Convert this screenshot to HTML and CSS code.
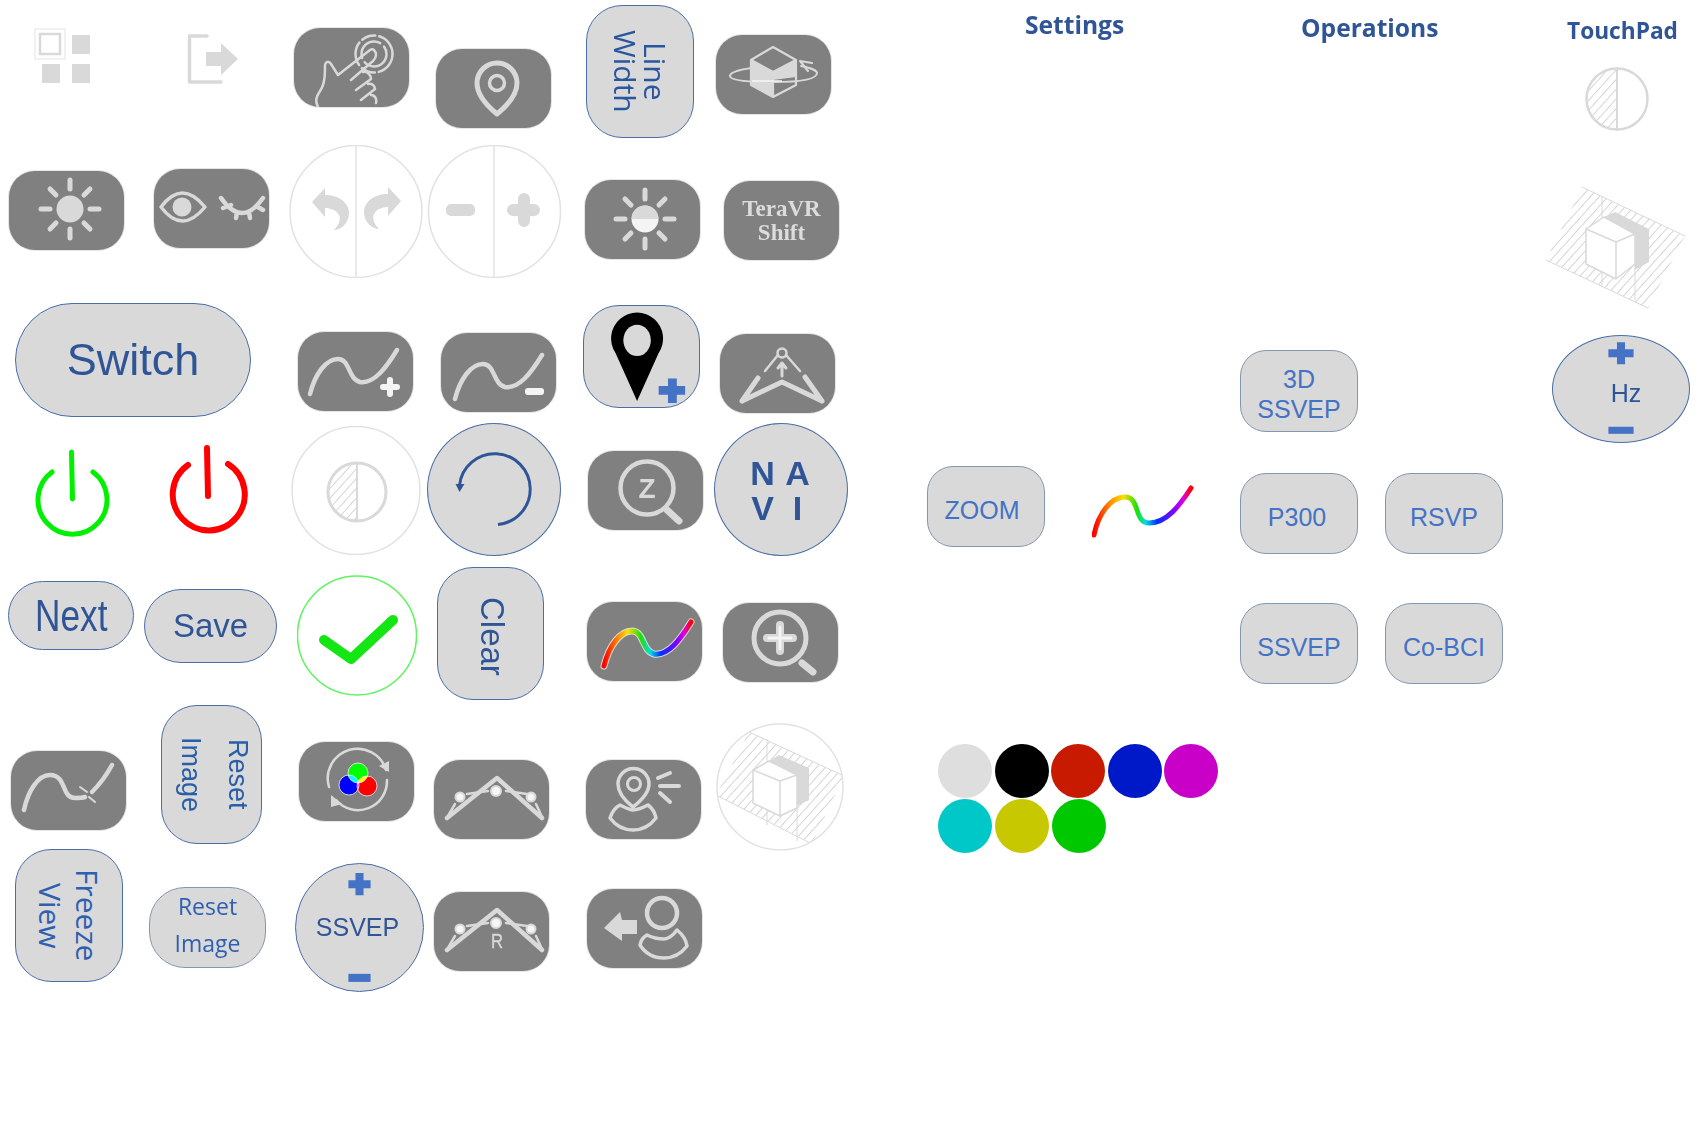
FILE: index.html
```html
<!DOCTYPE html>
<html lang="en">
<head>
<meta charset="utf-8">
<title>Button sheet</title>
<link rel="stylesheet" href="styles.css">
</head>
<body>
<svg class="defs" width="0" height="0" aria-hidden="true">
  <defs>
    <pattern id="hatch" width="6.500" height="6.500" patternUnits="userSpaceOnUse" patternTransform="rotate(42)">
      <line x1="0" y1="0" x2="0" y2="6.500" class="hl"/>
    </pattern>
    <linearGradient id="rb1" gradientUnits="userSpaceOnUse" x1="17" y1="0" x2="104" y2="0">
      <stop offset="0" stop-color="#ff0000"/><stop offset=".15" stop-color="#ff8000"/><stop offset=".27" stop-color="#ffe000"/><stop offset=".42" stop-color="#20e000"/><stop offset=".53" stop-color="#00e0e0"/><stop offset=".65" stop-color="#0030ff"/><stop offset=".84" stop-color="#8000ff"/><stop offset=".92" stop-color="#e000e0"/><stop offset="1" stop-color="#ff0000"/>
    </linearGradient>
    <linearGradient id="rb2" gradientUnits="userSpaceOnUse" x1="2" y1="0" x2="99" y2="0">
      <stop offset="0" stop-color="#ff0000"/><stop offset=".15" stop-color="#ff8000"/><stop offset=".3" stop-color="#ffe000"/><stop offset=".44" stop-color="#20e000"/><stop offset=".53" stop-color="#00e0e0"/><stop offset=".65" stop-color="#0030ff"/><stop offset=".84" stop-color="#9000ff"/><stop offset=".92" stop-color="#e000e0"/><stop offset="1" stop-color="#ff0000"/>
    </linearGradient>
    <clipPath id="halfC"><rect x="0" y="0" width="30" height="60"/></clipPath>
    <clipPath id="halfS"><rect x="0" y="0" width="33" height="66"/></clipPath>
    <clipPath id="roundC"><circle cx="64" cy="64" r="63"/></clipPath>
    <path id="curve" d="M12 62C17 42 28 27 40 27C52 27 50 47 62 50C76 52 88 36 99 18"/>
    <g id="rays">
      <line x1="0" y1="-29" x2="0" y2="-20"/><line x1="0" y1="20" x2="0" y2="29"/>
      <line x1="-29" y1="0" x2="-20" y2="0"/><line x1="20" y1="0" x2="29" y2="0"/>
      <line x1="-20" y1="-20" x2="-14" y2="-14"/><line x1="20" y1="-20" x2="14" y2="-14"/>
      <line x1="-20" y1="20" x2="-14" y2="14"/><line x1="20" y1="20" x2="14" y2="14"/>
    </g>
    <g id="multi">
      <path class="s" stroke-width="4.500" d="M13 58L63 18L108 58"/>
      <path class="s" stroke-width="2.500" d="M33 34L54 31M72 31L93 34M14 56L21 44M102 44L108 57"/>
      <circle class="dot" cx="26" cy="37" r="4.500"/><circle class="dot" cx="62" cy="31" r="5"/><circle class="dot" cx="97" cy="37" r="4.500"/>
    </g>
  </defs>
</svg>

<main class="canvas">
  <svg class="node n-grid" viewBox="0 0 60 60">
    <rect x="2" y="2" width="30" height="30" class="thin"/>
    <rect x="7" y="7" width="20" height="20" class="s sq" stroke-width="2.500"/>
    <rect x="39" y="8" width="18" height="19" class="f"/>
    <rect x="9" y="37" width="18" height="19" class="f"/>
    <rect x="39" y="37" width="18" height="19" class="f"/>
  </svg>
  <svg class="node n-logout" viewBox="0 0 60 56">
    <path class="s" stroke-width="3.500" d="M23 5H5.500V51H37"/>
    <path class="f" d="M22 21H37V12L54 28L37 44V35H22Z"/>
  </svg>

  <div class="node tile n-touch"><svg class="ico" viewBox="0 0 115 79">
    <path class="s" stroke-width="2.500" d="M24 79C21 73 22 69 26 63C31 56 31 46 31 37C32 33 35 33 37 36L44 47L76 22C79 20 82 23 82 27C82 29 81 31 79 33L57 52M69 44C73 43 77 47 77 51L62 62M74 56C78 55 81 58 81 61L67 72M77 67C81 67 83 71 82 75"/>
    <circle class="s dash1" cx="80" cy="26" r="18.500" stroke-width="2.500"/>
    <circle class="s dash2" cx="80" cy="26" r="12.500" stroke-width="2.500"/>
  </svg></div>

  <div class="node tile n-pin"><svg class="ico" viewBox="0 0 115 79">
    <path class="s" stroke-width="5" d="M61 65C50 56 41 46 41 34A20 20 0 0 1 81 34C81 46 72 56 61 65Z"/>
    <circle class="s" cx="61" cy="34" r="7.500" stroke-width="3.500"/>
  </svg></div>

  <div class="node pill vtext lw n-linewidth"><span>Line<br>Width</span></div>

  <div class="node tile n-cube"><svg class="ico" viewBox="0 0 115 79">
    <path class="f" d="M35 25L57 37V62L35 50Z"/>
    <path class="f" d="M57 37L80 25V42L57 45Z"/>
    <path class="s" stroke-width="2.200" d="M35 25L57 12L80 25L57 37ZM35 25V50L57 62L80 50V25M57 37V62"/>
    <path class="s" stroke-width="2" d="M35 33C22 35 14 38 14 41C14 46 35 47 57 47C80 47 101 45 101 38C101 36 96 33 85 31"/>
    <path class="s" stroke-width="2.200" d="M84 26L92 36M84 26L96 28"/>
    <line x1="36" y1="46" x2="66" y2="46" class="wl"/>
  </svg></div>

  <div class="node tile n-sun"><svg class="ico" viewBox="0 0 115 79">
    <use href="#rays" class="s" stroke-width="5" transform="translate(61 38)"/>
    <circle class="f" cx="61" cy="38" r="13.500"/>
  </svg></div>

  <div class="node tile n-eye"><svg class="ico" viewBox="0 0 115 79">
    <path class="s" stroke-width="3.500" d="M7 38Q28 10 51 38Q28 66 7 38Z"/>
    <circle class="f" cx="28" cy="38" r="9.500"/>
    <path class="s" stroke-width="4.500" d="M67 29Q88 59 109 29M69 39L77 36M82 49L83 43M96 49L95 43M109 41L102 37"/>
  </svg></div>

  <svg class="node n-undo" viewBox="0 0 134 133">
    <circle class="ring" cx="67" cy="66.500" r="66"/>
    <line class="ring" x1="67" y1="0" x2="67" y2="133"/>
    <path id="arrowBack" class="f" d="M23 57L36 43V50C50 50 60 58 60 68C60 78 52 85 45 85C50 80 52 74 50 70C47 65 42 63 36 63V72Z"/>
    <use href="#arrowBack" transform="translate(135 -1) scale(-1 1)"/>
  </svg>

  <svg class="node n-minplus" viewBox="0 0 135 133">
    <circle class="ring" cx="67.500" cy="66.500" r="66"/>
    <line class="ring" x1="67" y1="0" x2="67" y2="133"/>
    <rect class="f" x="19" y="59" width="29" height="12" rx="5"/>
    <path class="s" stroke-width="12" d="M86 65H107M97 54V76"/>
  </svg>

  <div class="node tile n-halfsun"><svg class="ico" viewBox="0 0 115 79">
    <use href="#rays" class="s" stroke-width="5" transform="translate(60 39)"/>
    <circle class="lite" cx="60" cy="39" r="13.500"/>
    <path class="f" d="M46.500 39A13.500 13.500 0 0 1 73.500 39Z"/>
  </svg></div>

  <div class="node tile n-tera"><span class="tera">TeraVR<br>Shift</span></div>

  <div class="node pill switch n-switch">Switch</div>

  <svg class="node n-pow-g" viewBox="0 0 86 90">
    <path class="pow-g" stroke-width="5" d="M22 25A34.500 34.500 0 1 0 63 25M41.500 5L42.500 52"/>
  </svg>
  <svg class="node n-pow-r" viewBox="0 0 88 92">
    <path class="pow-r" stroke-width="6" d="M23 23A36 36 0 1 0 63 22M42 6L43 54"/>
  </svg>

  <div class="node tile n-cplus"><svg class="ico" viewBox="0 0 115 79">
    <use href="#curve" class="s" stroke-width="4.500"/>
    <path class="wp" stroke-width="6" d="M85 55H99M92 48V62"/>
  </svg></div>

  <div class="node tile n-cminus"><svg class="ico" viewBox="0 0 115 79">
    <use href="#curve" class="s" stroke-width="4.500" transform="translate(2 4)"/>
    <rect class="lite2" x="84" y="55" width="19" height="7" rx="3"/>
  </svg></div>

  <div class="node pill n-pinplus"><svg class="ico" viewBox="0 0 117 103">
    <path class="blk" d="M54 97L32 48A26.500 26.500 0 1 1 76 48Z"/>
    <ellipse class="hole" cx="54" cy="35" rx="14" ry="16"/>
    <path class="bplus" stroke-width="9" d="M76 86H103M90 74V99"/>
  </svg></div>

  <div class="node tile n-tri"><svg class="ico" viewBox="0 0 115 79">
    <path class="s" stroke-width="5" d="M22 67L62 48L102 67M22 67L38 44M102 67L85 43"/>
    <path class="s" stroke-width="2.500" d="M45 37L58 21M80 37L66 21"/>
    <circle class="s" cx="62" cy="19" r="4.500" stroke-width="2.500"/>
    <path class="s" stroke-width="3" d="M62 42V30M58 34L62 29L66 34"/>
  </svg></div>

  <svg class="node n-contrast" viewBox="0 0 130 129">
    <circle class="ring" cx="65" cy="64.500" r="64"/>
    <g transform="translate(36 36)">
      <circle class="hatchfill" cx="30" cy="30" r="29" clip-path="url(#halfC)"/>
      <circle class="s" cx="30" cy="30" r="29" stroke-width="3"/>
      <line class="s" x1="30" y1="1" x2="30" y2="59" stroke-width="2"/>
    </g>
  </svg>

  <div class="node circle n-rotate"><svg class="ico" viewBox="0 0 134 133">
    <path class="blue" stroke-width="3" d="M71 102A36 36 0 1 0 32 62"/>
    <path class="bluef" d="M28 61H37L32 69Z"/>
  </svg></div>

  <div class="node tile n-z"><svg class="ico" viewBox="0 0 115 79">
    <circle class="s" cx="59" cy="37" r="26.500" stroke-width="4.500"/>
    <text class="ztxt" x="59" y="47">Z</text>
    <line class="s" stroke-width="7" x1="79" y1="59" x2="91" y2="70"/>
  </svg></div>

  <div class="node circle n-navi"><div class="navi"><span>N</span><span>A</span><span>V</span><span>I</span></div></div>

  <div class="node pill next n-next"><span>Next</span></div>
  <div class="node pill save n-save">Save</div>

  <svg class="node n-check" viewBox="0 0 120 121">
    <circle class="gring" cx="60" cy="60.500" r="59.500"/>
    <path class="gcheck" stroke-width="10" d="M27 65L54 84L96 45"/>
  </svg>

  <div class="node pill vtext clear n-clear"><span>Clear</span></div>

  <div class="node tile n-rainbow"><svg class="ico" viewBox="0 0 115 79">
    <use href="#curve" class="halo" stroke-width="7" transform="translate(5 2)"/>
    <path class="rb" stroke-width="5" d="M17 64C22 44 33 29 45 29C57 29 55 49 67 52C81 54 93 38 104 20"/>
  </svg></div>

  <div class="node tile n-zplus"><svg class="ico" viewBox="0 0 115 79">
    <circle class="s" cx="57" cy="35" r="26" stroke-width="5"/>
    <path class="s" stroke-width="8" d="M44 35H70M57 22V48"/>
    <path class="wp" stroke-width="3" d="M46 35H68M57 24V46"/>
    <line class="s" stroke-width="7" x1="79" y1="60" x2="90" y2="69"/>
  </svg></div>

  <div class="node tile n-ccut"><svg class="ico" viewBox="0 0 115 79">
    <path class="s" stroke-width="4.500" d="M13 59C17 40 27 24 39 24C56 24 50 47 64 47C68 47 71 47 74 46M81 41C88 34 95 25 101 14"/>
    <path class="s" stroke-width="2" d="M69 36L76 41M78 46L84 51"/>
  </svg></div>

  <div class="node pill vtext rimg n-resetv"><span>Reset<br>Image</span></div>

  <div class="node tile n-rgb"><svg class="ico" viewBox="0 0 115 79">
    <path class="s" stroke-width="2.500" d="M30 45A29 29 0 0 1 87 28"/>
    <path class="f" d="M80 24L90 19L90 30Z"/>
    <path class="s" stroke-width="2.500" d="M88 38A29 29 0 0 1 37 58"/>
    <path class="f" d="M32 53L43 62L32 65Z"/>
    <g class="iso">
      <circle class="m" fill="#00ff00" cx="59" cy="31" r="10"/>
      <circle class="m" fill="#0000ff" cx="50" cy="43" r="10"/>
      <circle class="m" fill="#ff0000" cx="68" cy="44" r="10"/>
    </g>
  </svg></div>

  <div class="node tile n-multi"><svg class="ico" viewBox="0 0 115 79"><use href="#multi"/></svg></div>

  <div class="node tile n-locp"><svg class="ico" viewBox="0 0 115 79">
    <path class="s" stroke-width="3.500" d="M47 47C38 40 32 32 32 24A15.500 15.500 0 0 1 63 24C63 32 56 40 47 47Z"/>
    <circle class="s" cx="48" cy="24" r="6.500" stroke-width="3"/>
    <path class="s" stroke-width="4" d="M72 18L84 13M74 26H93M74 33L84 42"/>
    <path class="s" stroke-width="3.500" d="M24 58C26 52 30 47 34 45C38 47 43 50 47 50C52 50 58 47 62 45C66 48 69 53 70 58C64 66 56 70 47 70C38 70 30 66 24 58Z"/>
  </svg></div>

  <svg class="node n-cubec" viewBox="0 0 128 128">
    <g clip-path="url(#roundC)">
      <path class="hatchfill" d="M33 9L128 53L96 121L0 72Z"/>
      <path class="s thinner" d="M33 9L128 53M96 121L0 72M51 16V102M81 52V118"/>
    </g>
    <path class="lite3" d="M37 47L53 38L81 52L64 58V93L37 80Z"/>
    <path class="lite3" d="M64 58L81 52V85L64 93Z"/>
    <path class="f" d="M53 38L63 32L93 45V77L81 83V52Z"/>
    <path class="s" stroke-width="1.500" d="M37 47L53 38L81 52L64 58ZM37 47V80L64 93L81 85V52M64 58V93"/>
    <circle class="ring" cx="64" cy="64" r="63"/>
  </svg>

  <div class="node pill vtext freeze n-freeze"><span>Freeze<br>View</span></div>
  <div class="node pill rih n-reseth"><span>Reset<br>Image</span></div>

  <div class="node circle ctrl n-ssvep">
    <svg class="overlay" viewBox="0 0 129 129">
      <path class="bplus" stroke-width="8" d="M53 21H75M64 10V32"/>
      <rect class="bluef2" x="53" y="110" width="22" height="8"/>
    </svg>
    <span class="ssv">SSVEP</span>
  </div>

  <div class="node tile n-rmulti"><svg class="ico" viewBox="0 0 115 79">
    <use href="#multi"/>
    <text class="rtxt" x="63" y="56" textLength="12" lengthAdjust="spacingAndGlyphs">R</text>
  </svg></div>

  <div class="node tile n-back"><svg class="ico" viewBox="0 0 115 79">
    <circle class="s" cx="75" cy="24" r="15" stroke-width="4.500"/>
    <path class="s" stroke-width="3.500" d="M53 56C54 51 56 48 60 46C64 48 70 50 77 50C82 50 87 45 90 41C95 45 99 50 100 57C94 65 86 69 77 69C66 69 58 64 53 56Z"/>
    <path class="f" d="M17 39L33 23L35 31H50V45H35L35 52Z"/>
  </svg></div>

  <h2 class="node head n-h-settings">Settings</h2>
  <h2 class="node head n-h-ops">Operations</h2>
  <h2 class="node head small n-h-tp">TouchPad</h2>

  <svg class="node n-halfc" viewBox="0 0 66 66">
    <circle class="hatchfill" cx="33" cy="33" r="30" clip-path="url(#halfS)"/>
    <circle class="s" cx="33" cy="33" r="30.500" stroke-width="2.500"/>
    <line class="s" x1="33" y1="2" x2="33" y2="64" stroke-width="2"/>
  </svg>

  <svg class="node n-cubep" viewBox="0 0 140 122">
    <path class="hatchfill" d="M36 0L139 49L102 121L0 73Z"/>
    <path class="s thinner" d="M36 0L139 49M102 121L0 73M56 10V100M89 47V113"/>
    <path class="lite3" d="M40 42L58 30L89 47L70 55V92L40 77Z"/>
    <path class="lite3" d="M70 55L89 47V77L70 92Z"/>
    <path class="f" d="M58 30L69 25L103 42V75L89 83V47Z"/>
    <path class="s" stroke-width="1.500" d="M40 42L58 30L89 47L70 55ZM40 42V77L70 92L89 77V47M70 55V92"/>
  </svg>

  <div class="node ellipse ctrl n-hz">
    <svg class="overlay" viewBox="0 0 138 108">
      <path class="bplus" stroke-width="8" d="M56 18H81M68.500 7V29"/>
      <rect class="bluef2" x="56" y="91" width="25" height="7"/>
    </svg>
    <span class="hz">Hz</span>
  </div>

  <div class="node soft s-3d n-3d"><span>3D<br>SSVEP</span></div>
  <div class="node soft s-zoom n-zoomb"><span>ZOOM</span></div>
  <svg class="node n-rbow" viewBox="0 0 102 53">
    <path class="rb2" stroke-width="5" d="M2 50C6 30 18 12 33 12C48 12 42 38 57 38C75 38 88 20 99 3"/>
  </svg>
  <div class="node soft s-p300 n-p300"><span>P300</span></div>
  <div class="node soft n-rsvp"><span>RSVP</span></div>
  <div class="node soft n-ssv2"><span>SSVEP</span></div>
  <div class="node soft n-cobci"><span>Co-BCI</span></div>

  <div class="node swatch c-gray n-s1"></div>
  <div class="node swatch c-black n-s2"></div>
  <div class="node swatch c-red n-s3"></div>
  <div class="node swatch c-blue n-s4"></div>
  <div class="node swatch c-mag n-s5"></div>
  <div class="node swatch c-cyan n-s6"></div>
  <div class="node swatch c-yel n-s7"></div>
  <div class="node swatch c-grn n-s8"></div>
</main>
</body>
</html>
```

FILE: styles.css
```css
html, body { margin: 0; padding: 0; background: #fff; overflow: hidden; }
.defs { position: absolute; }
.canvas {
  position: relative;
  width: 1701px;
  height: 1126px;
  font-family: "Liberation Sans", Arial, sans-serif;
  color: #2f5597;
}
.node { position: absolute; box-sizing: border-box; margin: 0; }
.ico { display: block; width: 100%; height: 100%; }

/* base components */
.tile {
  width: 115px;
  height: 79px;
  background: #808080;
  border-radius: 26px;
  box-shadow: 0 0 0 1px #e6e6e6;
  display: flex;
  align-items: center;
  justify-content: center;
}
.pill, .circle, .ellipse {
  background: #d9d9d9;
  border: 1.5px solid #4a6ea8;
  display: flex;
  align-items: center;
  justify-content: center;
  text-align: center;
}
.pill { border-radius: 36px; }
.circle { border-radius: 50%; }
.ellipse { border-radius: 50%; }
.ctrl { position: absolute; }
.overlay { position: absolute; inset: -1.5px; width: calc(100% + 3px); height: calc(100% + 3px); }
.vtext { writing-mode: vertical-rl; }
.soft {
  background: #d9d9d9;
  border: 1.5px solid #8497b0;
  border-radius: 26px;
  display: flex;
  align-items: center;
  justify-content: center;
  text-align: center;
  color: #4472c4;
  font-size: 25px;
  line-height: 30px;
  padding-top: 6px;
}
.s-3d { padding-top: 5px; }
.s-zoom { padding-right: 8px; }
.s-p300 { padding-right: 4px; }
.swatch { width: 54px; height: 54px; border-radius: 50%; }
.c-gray { background: #dedede; }
.c-black { background: #000; }
.c-red { background: #c81a00; }
.c-blue { background: #0019c8; }
.c-mag { background: #c800c8; }
.c-cyan { background: #00c8c8; }
.c-yel { background: #c8c800; }
.c-grn { background: #00c800; }

/* svg paint */
.s { fill: none; stroke: #d9d9d9; stroke-linecap: round; stroke-linejoin: round; }
.f { fill: #d9d9d9; }
.thin { fill: none; stroke: #e4e4e4; stroke-width: 1; }
.sq { stroke-linecap: butt; stroke-linejoin: miter; }
.ring { fill: #fff; stroke: #e2e2e2; stroke-width: 1.5; }
line.ring { fill: none; }
.n-cubec .ring { fill: none; }
.dash1 { stroke-dasharray: 24 4 14 4; }
.dash2 { stroke-dasharray: 30 5; }
.wl { stroke: #f4f4f4; stroke-width: 1.5; }
.wp { fill: none; stroke: #f4f4f4; stroke-linecap: round; }
.lite { fill: #f4f4f4; }
.lite2 { fill: #f4f4f4; }
.lite3 { fill: #fff; }
.blk { fill: #000; }
.hole { fill: #d9d9d9; }
.bplus { fill: none; stroke: #4472c4; }
.bluef2 { fill: #4472c4; }
.blue { fill: none; stroke: #2f5597; }
.bluef { fill: #2f5597; }
.hl { stroke: #d2d2d2; stroke-width: 1.8; }
.hatchfill { fill: url(#hatch); }
.thinner { stroke-width: 1; }
.dot { fill: #f6f6f6; stroke: #d9d9d9; stroke-width: 2; }
.pow-g { fill: none; stroke: #00f000; stroke-linecap: round; }
.pow-r { fill: none; stroke: #ff0000; stroke-linecap: round; }
.gring { fill: #fff; stroke: #5cf55c; stroke-width: 1.5; }
.gcheck { fill: none; stroke: #14e614; stroke-linecap: round; stroke-linejoin: round; }
.halo { fill: none; stroke: #dcdcdc; stroke-linecap: round; }
.rb { fill: none; stroke: url(#rb1); stroke-linecap: round; }
.rb2 { fill: none; stroke: url(#rb2); stroke-linecap: round; }
.iso { isolation: isolate; }
.m { mix-blend-mode: screen; stroke: #f0f0f0; stroke-width: .8; }
.ztxt { font: bold 28px "Liberation Sans", Arial, sans-serif; fill: #d9d9d9; text-anchor: middle; }
.rtxt { font: 21px "Liberation Sans", Arial, sans-serif; fill: #d9d9d9; text-anchor: middle; stroke: #d9d9d9; stroke-width: .4; }

/* text */
.lw { font: 30px/30px "Open Sans", sans-serif; color: #2a56a0; }
.tera { font: bold 23px/24px "Liberation Serif", serif; color: #dcdcdc; text-align: center; }
.switch { font-size: 45px; border-radius: 57px; }
.navi {
  display: grid;
  grid-template-columns: 35px 35px;
  grid-auto-rows: 35px;
  align-items: center;
  justify-items: center;
  font: bold 34px/35px "Liberation Sans", Arial, sans-serif;
  margin: 2px 2px 0 0;
}
.next { font-size: 44px; border-radius: 35px; }
.next span { display: inline-block; transform: scaleX(.8); }
.save { font-size: 33px; border-radius: 37px; }
.clear { font-size: 33px; padding-top: 6px; padding-left: 2px; }
.rimg { font-size: 27px; line-height: 47px; color: #2a5ea8; padding-left: 4px; }
.freeze { font: 30px/37px "Open Sans", sans-serif; color: #2f5fb0; }
.rih { font: 23px/37px "Open Sans", sans-serif; color: #2f5fb0; border-color: #8497b0; padding-bottom: 6px; }
.ssv { font-size: 25px; position: relative; right: 2px; }
.hz { font-size: 25px; position: relative; padding-left: 10px; padding-top: 8px; }
.head { font: bold 24.600px/34px "Open Sans", sans-serif; color: #2f5597; white-space: nowrap; }
.small { font-size: 22.700px; }

/* placement on the sheet */
.n-grid { left: 33px; top: 27px; width: 60px; height: 60px; }
.n-logout { left: 184px; top: 31px; width: 60px; height: 56px; }
.n-touch { left: 294px; top: 28px; }
.n-pin { left: 436px; top: 49px; }
.n-linewidth { left: 586px; top: 5px; width: 108px; height: 133px; }
.n-cube { left: 716px; top: 35px; }
.n-sun { left: 9px; top: 171px; }
.n-eye { left: 154px; top: 169px; }
.n-undo { left: 289px; top: 145px; width: 134px; height: 133px; }
.n-minplus { left: 427px; top: 145px; width: 135px; height: 133px; }
.n-halfsun { left: 585px; top: 180px; }
.n-tera { left: 724px; top: 181px; }
.n-switch { left: 15px; top: 303px; width: 236px; height: 114px; }
.n-pow-g { left: 30px; top: 447px; width: 86px; height: 90px; }
.n-pow-r { left: 165px; top: 442px; width: 88px; height: 92px; }
.n-cplus { left: 298px; top: 332px; }
.n-cminus { left: 441px; top: 333px; }
.n-pinplus { left: 583px; top: 305px; width: 117px; height: 103px; }
.n-tri { left: 720px; top: 334px; }
.n-contrast { left: 291px; top: 426px; width: 130px; height: 129px; }
.n-rotate { left: 427px; top: 423px; width: 134px; height: 133px; }
.n-z { left: 588px; top: 451px; }
.n-navi { left: 714px; top: 423px; width: 134px; height: 133px; }
.n-next { left: 8px; top: 581px; width: 126px; height: 69px; }
.n-save { left: 144px; top: 589px; width: 133px; height: 74px; }
.n-check { left: 297px; top: 575px; width: 120px; height: 121px; }
.n-clear { left: 437px; top: 567px; width: 107px; height: 133px; }
.n-rainbow { left: 587px; top: 602px; }
.n-zplus { left: 723px; top: 603px; }
.n-ccut { left: 11px; top: 751px; }
.n-resetv { left: 161px; top: 705px; width: 101px; height: 139px; }
.n-rgb { left: 299px; top: 742px; }
.n-multi { left: 434px; top: 760px; }
.n-locp { left: 586px; top: 760px; }
.n-cubec { left: 716px; top: 723px; width: 128px; height: 128px; }
.n-freeze { left: 15px; top: 849px; width: 108px; height: 133px; }
.n-reseth { left: 149px; top: 887px; width: 117px; height: 81px; }
.n-ssvep { left: 295px; top: 863px; width: 129px; height: 129px; }
.n-rmulti { left: 434px; top: 892px; }
.n-back { left: 587px; top: 889px; }
.n-h-settings { left: 1025px; top: 8px; }
.n-h-ops { left: 1301px; top: 11px; }
.n-h-tp { left: 1567px; top: 14px; }
.n-halfc { left: 1584px; top: 66px; width: 66px; height: 66px; }
.n-cubep { left: 1546px; top: 187px; width: 140px; height: 122px; }
.n-hz { left: 1552px; top: 335px; width: 138px; height: 108px; }
.n-3d { left: 1240px; top: 350px; width: 118px; height: 82px; }
.n-zoomb { left: 927px; top: 466px; width: 118px; height: 81px; }
.n-rbow { left: 1092px; top: 485px; width: 102px; height: 53px; }
.n-p300 { left: 1240px; top: 473px; width: 118px; height: 81px; }
.n-rsvp { left: 1385px; top: 473px; width: 118px; height: 81px; }
.n-ssv2 { left: 1240px; top: 603px; width: 118px; height: 81px; }
.n-cobci { left: 1385px; top: 603px; width: 118px; height: 81px; }
.n-s1 { left: 938px; top: 744px; }
.n-s2 { left: 995px; top: 744px; }
.n-s3 { left: 1051px; top: 744px; }
.n-s4 { left: 1108px; top: 744px; }
.n-s5 { left: 1164px; top: 744px; }
.n-s6 { left: 938px; top: 799px; }
.n-s7 { left: 995px; top: 799px; }
.n-s8 { left: 1052px; top: 799px; }
```
